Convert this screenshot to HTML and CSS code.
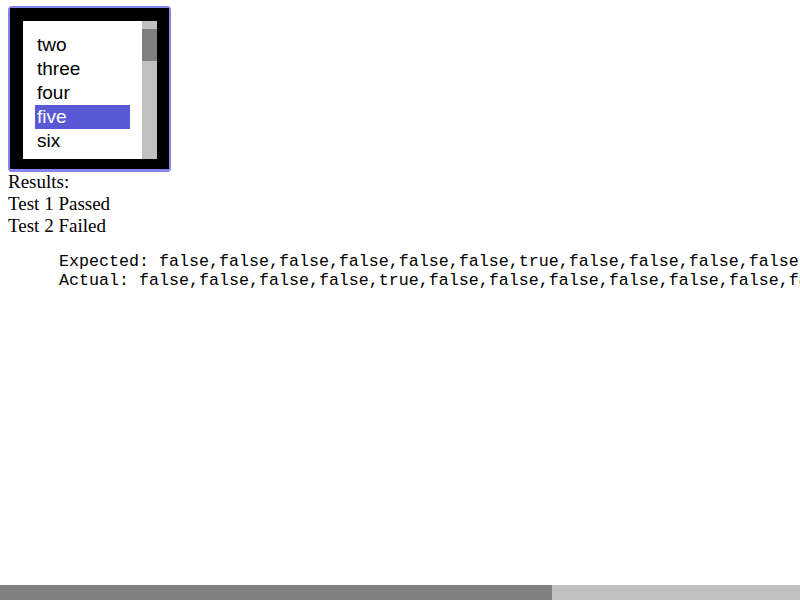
FILE: index.html
```html
<!DOCTYPE html>
<html>
<head>
<meta charset="utf-8">
<link rel="stylesheet" href="styles.css">
</head>
<body>
<div class="ring">
  <div class="listbox">
    <div class="options">
      <div class="option">two</div>
      <div class="option">three</div>
      <div class="option">four</div>
      <div class="option selected">five</div>
      <div class="option">six</div>
    </div>
    <div class="scrollbar"><div class="thumb"></div></div>
  </div>
</div>
<div class="results">Results:<br>Test 1 Passed<br>Test 2 Failed</div>
<pre class="detail">Expected: false,false,false,false,false,false,true,false,false,false,false,false,false,false,false,false,false
Actual: false,false,false,false,true,false,false,false,false,false,false,false,false,false,false,false,false</pre>
<div class="hscroll"><div class="hscroll-thumb"></div></div>
</body>
</html>
```
FILE: styles.css
```css
html, body {
  background: #ffffff;
}
html {
  overflow: hidden;
}
body {
  margin: 0;
  padding: 6px 8px 8px 8px;
  color: #000000;
  font-family: "Liberation Serif", serif;
}
.ring {
  width: fit-content;
  border: 2px solid #8585ea;
  border-bottom-width: 3px;
  border-radius: 4px;
  margin-bottom: -1px;
}
.listbox {
  display: flex;
  border-style: solid;
  border-color: #000000;
  border-width: 13px 12px 10px 13px;
  height: 138px;
  background: #ffffff;
}
.options {
  width: 95px;
  padding: 12px;
  overflow: hidden;
  font-family: "Liberation Sans", Arial, sans-serif;
  font-size: 19px;
}
.option {
  height: 24px;
  line-height: 24px;
  padding-left: 2px;
  white-space: nowrap;
}
.option.selected {
  background: #5959d5;
  color: #ffffff;
}
.scrollbar {
  width: 15px;
  background: #c0c0c0;
}
.thumb {
  margin-top: 8px;
  height: 32px;
  background: #808080;
}
.results {
  font-size: 19px;
  line-height: 22px;
}
.detail {
  margin: 15px 0;
  padding-left: 51px;
  font-family: "Liberation Mono", monospace;
  font-size: 16.67px;
  line-height: 19px;
}
.hscroll {
  position: fixed;
  left: 0;
  right: 0;
  bottom: 0;
  height: 15px;
  background: #c0c0c0;
}
.hscroll-thumb {
  width: 552px;
  height: 100%;
  background: #808080;
}
```
